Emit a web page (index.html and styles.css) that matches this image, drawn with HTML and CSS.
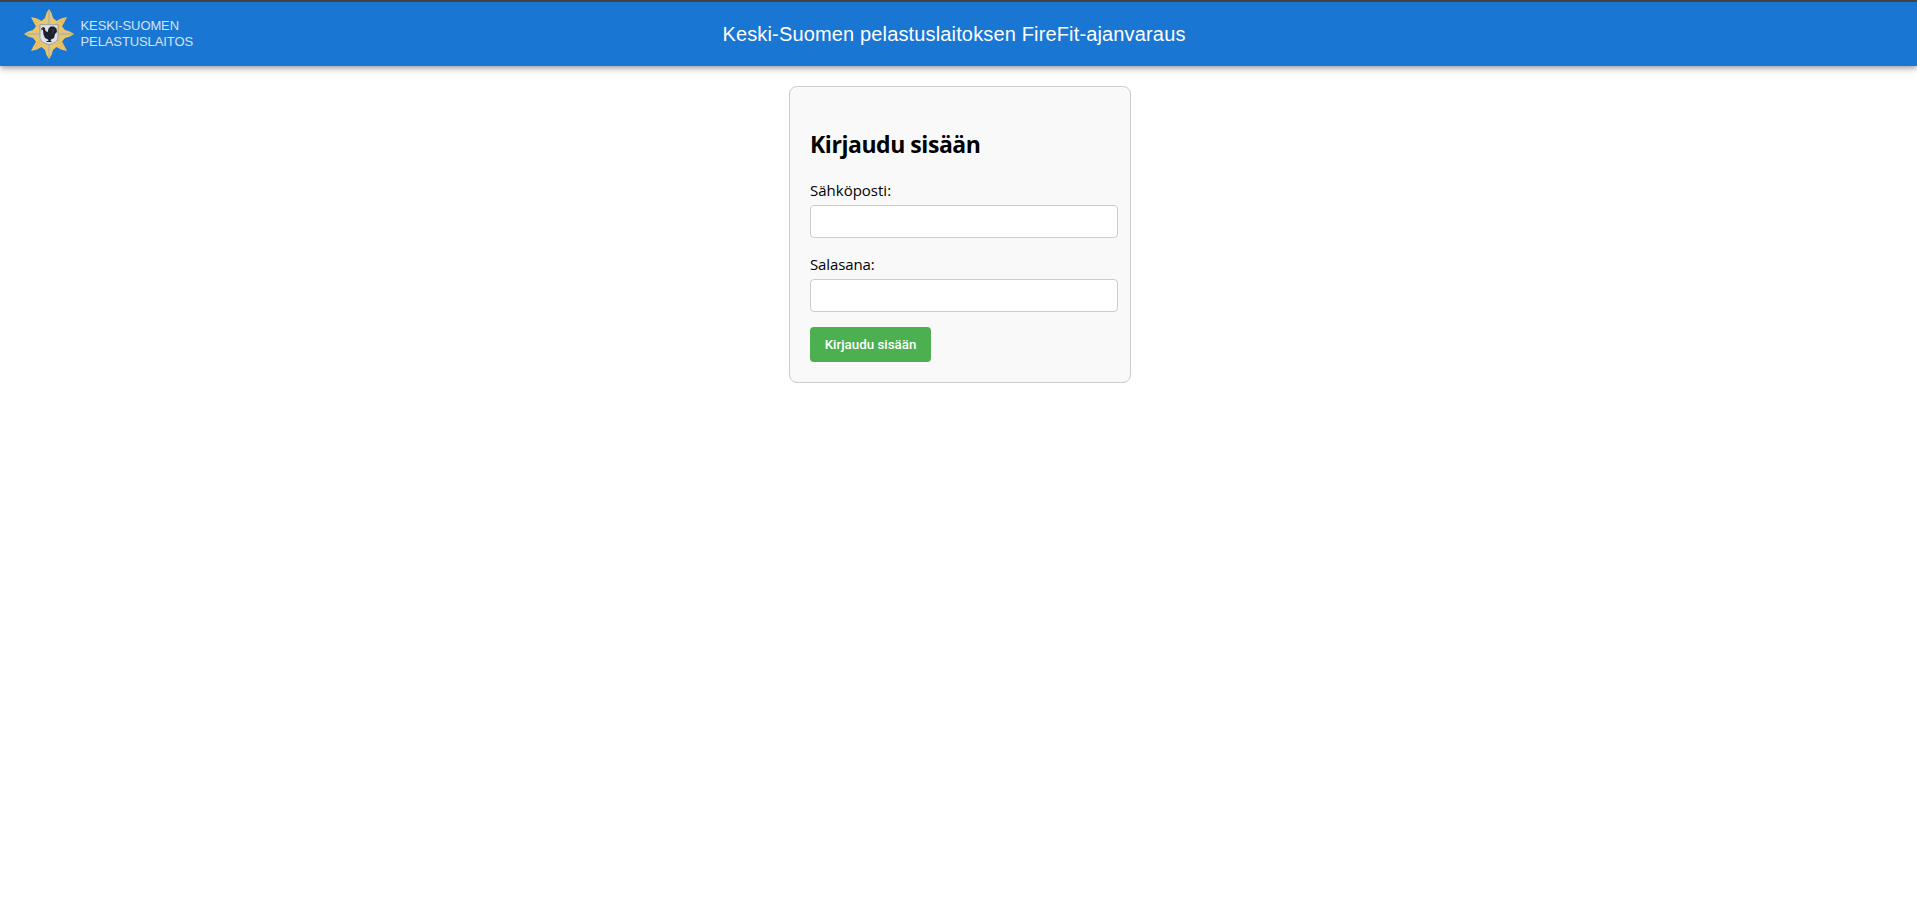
FILE: index.html
```html
<!DOCTYPE html>
<html lang="fi">
<head>
<meta charset="utf-8">
<title>FireFit-ajanvaraus</title>
<link rel="stylesheet" href="styles.css">
</head>
<body>
<header class="app-bar">
  <div class="brand">
    <svg class="emblem" viewBox="0 0 50 50" aria-hidden="true">
      <path d="M25 0 27.500 4 29 9 32.500 12 37 9.500 43 8 40.500 13 38 17.500 41 21 46 22.500 50 25 46 27.500 41 29 38 32.500 40.500 37 43 42 37 40.500 32.500 38 29 41 27.500 46 25 50 22.500 46 21 41 17.500 38 13 40.500 7 42 9.500 37 12 32.500 9 29 4 27.500 0 25 4 22.500 9 21 12 17.500 9.500 13 7 8 13 9.500 17.500 12 21 9 22.500 4Z" fill="#ecc567"/>
      <path d="M25 1 27 8 28 17H22L23 8ZM25 49 27 42 28 33H22L23 42ZM1 25 8 23 17 22V28L8 27ZM49 25 42 23 33 22V28L42 27Z" fill="#d8c590"/>
      <path d="M25 2V15M25 36V48M2 25H15M35 25H48" stroke="#a89b70" stroke-width=".6"/>
      <path d="M9 10 17 18M12 10.500 19 16M10.500 13 16 19M41 10 33 18M38 10.500 31 16M39.500 13 34 19M9 40 17 32M12 39.500 19 34M10.500 37 16 31M41 40 33 32M38 39.500 31 34M39.500 37 34 31" stroke="#bd9e55" stroke-width=".6" stroke-dasharray="1.200 1"/>
      <path d="M16 15.700H34V28.500C34 32 30 34.500 25 35.500 20 34.500 16 32 16 28.500Z" fill="#dce1eb" stroke="#8c9299" stroke-width=".8"/>
      <path d="M17.300 19.500 19 18 20.800 18.800 21.500 22 23.800 23 24.500 19.500 26.500 17.600 30 17.500 32.500 19.500 33 23 31 25 30 29 27 30.500 26.500 32H27.500V33H22.500V32H24.500L24 30.500 21 29 19.500 25.500 19 21.500Z" fill="#1d1f2b"/>
      <path d="M27 20 29.500 23M30.500 19.500 28 25" stroke="#3c4658" stroke-width=".6"/>
      <path d="M17 19.500 19 18 19.300 20 17.500 21.500Z" fill="#a33b3b"/>
    </svg>
    <div class="brand-name">KESKI-SUOMEN<br>PELASTUSLAITOS</div>
  </div>
  <div class="title">Keski-Suomen pelastuslaitoksen FireFit-ajanvaraus</div>
  <div class="spacer"></div>
</header>
<main class="login">
  <h2 class="heading">Kirjaudu sisään</h2>
  <form>
    <div class="field">
      <label class="label" for="email">Sähköposti:</label>
      <input class="input" id="email" type="email">
    </div>
    <div class="field">
      <label class="label label-password" for="password">Salasana:</label>
      <input class="input" id="password" type="password">
    </div>
    <button class="submit" type="button">Kirjaudu sisään</button>
  </form>
</main>
</body>
</html>
```
FILE: styles.css
```css
body {
  margin: 0;
  background: #fff;
  color: #000;
  font-family: "Open Sans", "Noto Sans", sans-serif;
}
.app-bar {
  box-sizing: border-box;
  display: flex;
  align-items: center;
  height: 66px;
  padding: 0 24px;
  border-top: 2px solid #424242;
  background: #1976d2;
  color: #fff;
  font-family: "Liberation Sans", Arial, sans-serif;
  box-shadow: 0 2px 4px -1px rgba(0, 0, 0, .2), 0 4px 5px rgba(0, 0, 0, .14), 0 1px 10px rgba(0, 0, 0, .12);
}
.brand {
  display: flex;
  flex: 0 0 200px;
  align-items: center;
}
.emblem {
  width: 50px;
  height: 50px;
  fill: none;
}
.brand-name {
  margin-left: 6.5px;
  padding-bottom: 1px;
  color: #d3e4f6;
  font-size: 13px;
  letter-spacing: -.1px;
  line-height: 15.5px;
}
.title {
  flex: 1;
  padding-right: 9px;
  font-size: 20px;
  letter-spacing: .0075em;
  line-height: 32px;
  text-align: center;
}
.spacer {
  flex: 0 0 200px;
}
.login {
  box-sizing: border-box;
  width: 342px;
  height: 297px;
  margin: 20px 0 0 789px;
  padding: 38px 20px 20px;
  border: 1px solid #ccc;
  border-radius: 8px;
  background: #f9f9f9;
}
.heading {
  margin: 0;
  font-size: 23px;
  font-weight: 700;
  letter-spacing: -.45px;
  line-height: 38px;
  height: 54px;
}
.field {
  height: 74px;
}
.label {
  display: block;
  height: 26px;
  font-size: 15px;
  line-height: 22px;
}
.label-password {
  letter-spacing: -.12px;
}
.input {
  display: block;
  box-sizing: border-box;
  width: 308px;
  height: 33px;
  padding: 8px;
  border: 1px solid #ccc;
  border-radius: 4px;
  background: #fff;
}
.submit {
  display: block;
  width: 121px;
  height: 35px;
  padding: 0;
  border: 0;
  border-radius: 4px;
  background: #4caf50;
  color: #fff;
  font-family: Roboto, sans-serif;
  font-size: 13.333px;
  font-weight: 500;
}
```
